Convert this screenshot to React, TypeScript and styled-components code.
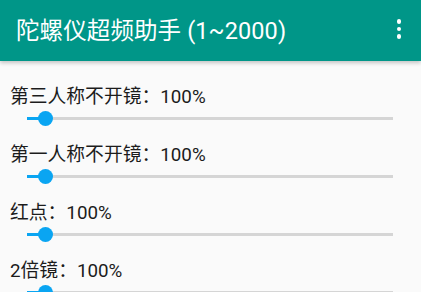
import React from "react";
import styled, { createGlobalStyle } from "styled-components";

const GlobalStyle = createGlobalStyle`
  html, body {
    margin: 0;
    padding: 0;
    background: #fafafa;
    overflow: hidden;
  }
  body {
    font-family: Roboto, "Noto Sans CJK SC", sans-serif;
  }
`;

const Screen = styled.div`
  width: 421px;
  height: 292px;
  display: flex;
  flex-direction: column;
  background: #fafafa;
  overflow: hidden;
`;

const AppBar = styled.header`
  flex: none;
  height: 61px;
  box-sizing: border-box;
  display: flex;
  align-items: center;
  justify-content: space-between;
  padding: 0 14px 3px 16px;
  background: #009688;
  box-shadow: 0 2px 4px rgba(0, 0, 0, 0.22);
  position: relative;
  z-index: 1;
`;

const Title = styled.h1`
  margin: 0;
  color: #fff;
  font-size: 23.5px;
  font-weight: 400;
  letter-spacing: 0.1px;
`;

const MenuDots = styled.div`
  display: flex;
  flex-direction: column;
  gap: 3px;
  padding: 4px 6px;

  span {
    width: 4.5px;
    height: 4.5px;
    border-radius: 50%;
    background: #fff;
  }
`;

const List = styled.main`
  flex: 1;
  padding: 24px 0 0;
`;

const Row = styled.section`
  display: flex;
  flex-direction: column;
  margin-bottom: 16px;
`;

const Label = styled.div`
  padding-left: 10px;
  height: 24px;
  line-height: 24px;
  font-size: 18.8px;
  color: #1c1c1c;
`;

const SliderArea = styled.div`
  height: 18px;
  margin: 0 28px 0 27px;
  display: flex;
  align-items: center;
`;

const Track = styled.div`
  position: relative;
  flex: 1;
  height: 3px;
  background: #d5d5d5;
`;

const Fill = styled.div`
  height: 100%;
  background: #0aa5f2;
`;

const Thumb = styled.div`
  position: absolute;
  top: 50%;
  width: 15px;
  height: 15px;
  margin: -7.5px 0 0 -7.5px;
  border-radius: 50%;
  background: #0aa5f2;
`;

const MAX = 2000;

const items = [
  { name: "第三人称不开镜", value: 100 },
  { name: "第一人称不开镜", value: 100 },
  { name: "红点", value: 100 },
  { name: "2倍镜", value: 100 },
];

export default function App() {
  return (
    <>
      <GlobalStyle />
      <Screen>
        <AppBar>
          <Title>陀螺仪超频助手 (1~2000)</Title>
          <MenuDots>
            <span />
            <span />
            <span />
          </MenuDots>
        </AppBar>
        <List>
          {items.map((it) => {
            const pct = (it.value / MAX) * 100;
            return (
              <Row key={it.name}>
                <Label>
                  {it.name}：{it.value}%
                </Label>
                <SliderArea>
                  <Track>
                    <Fill style={{ width: `${pct}%` }} />
                    <Thumb style={{ left: `${pct}%` }} />
                  </Track>
                </SliderArea>
              </Row>
            );
          })}
        </List>
      </Screen>
    </>
  );
}
